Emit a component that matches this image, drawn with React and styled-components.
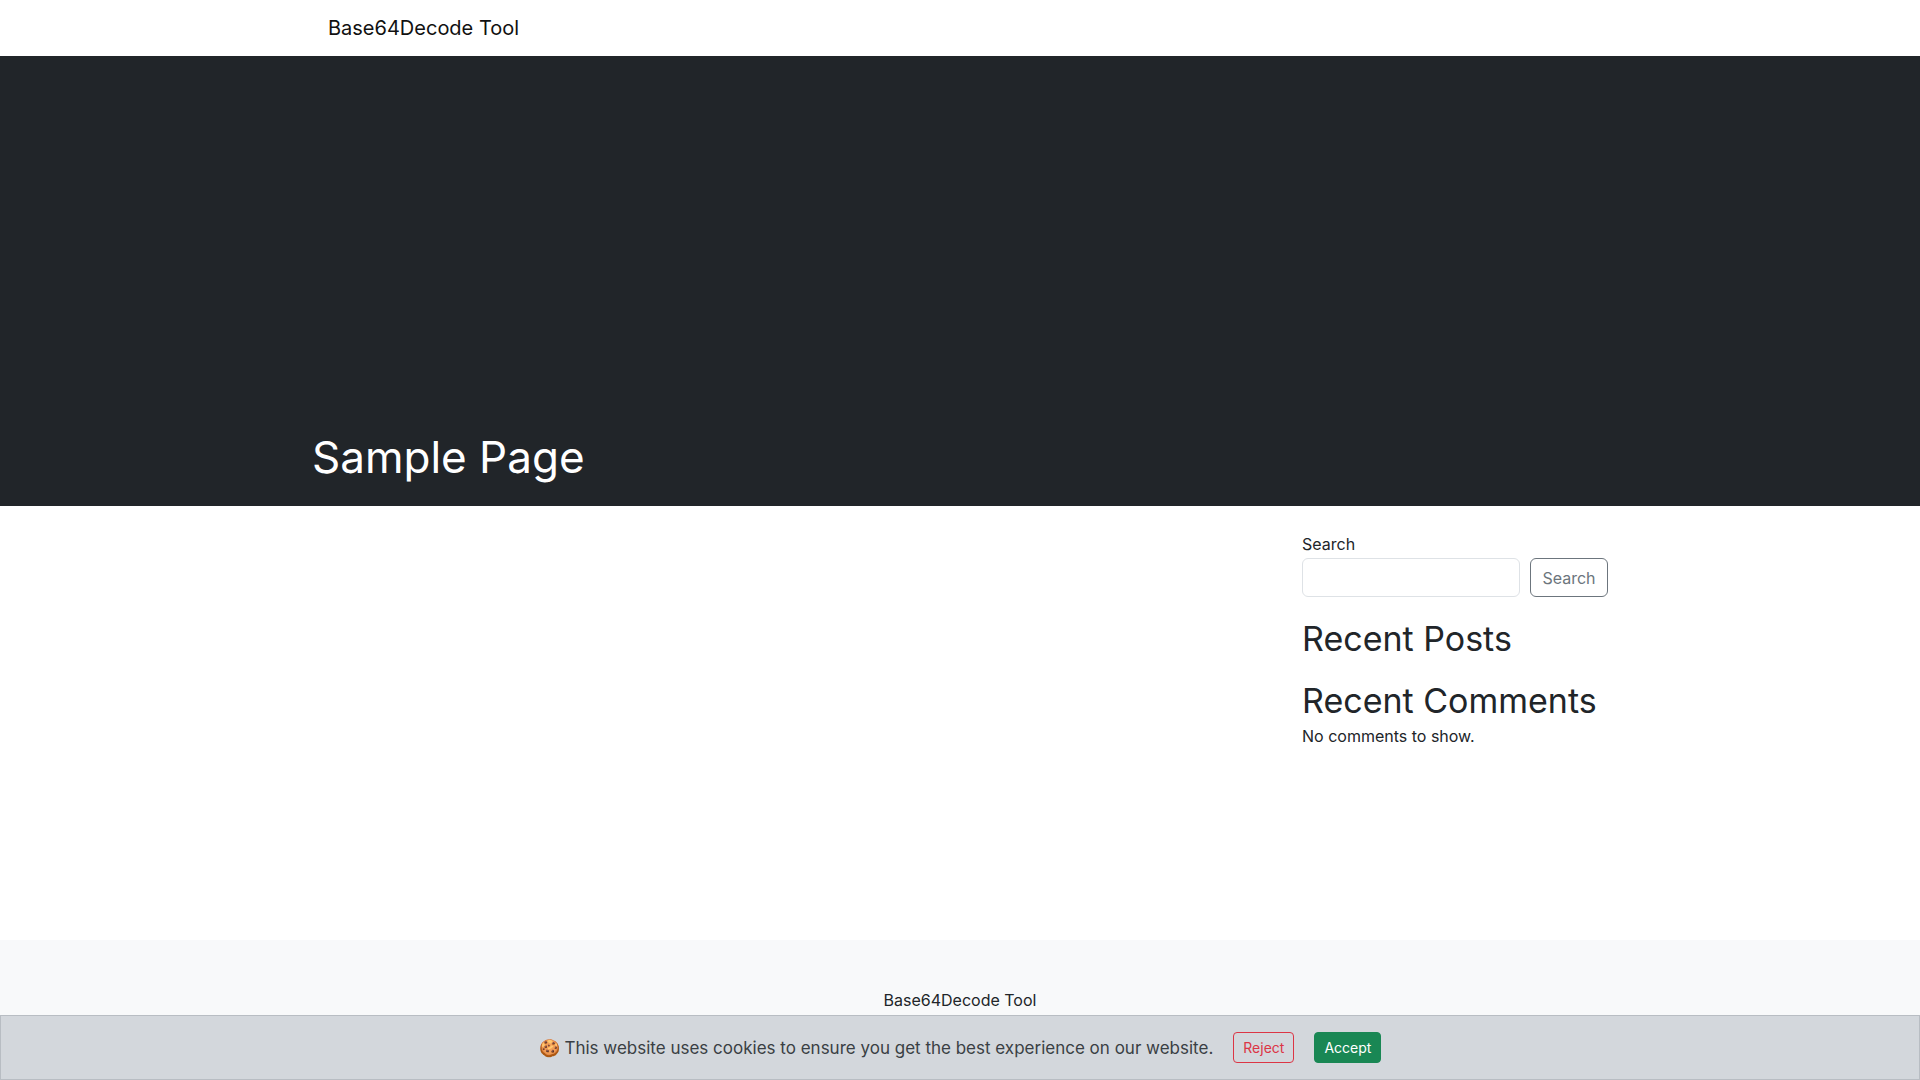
import React from "react";
import styled, { createGlobalStyle } from "styled-components";

const Global = createGlobalStyle`
  * { box-sizing: border-box; }
  body { margin: 0; font-family: Inter, "Noto Sans", sans-serif; color: #212529; background: #fff; }
`;
const Page = styled.div`min-height: 1080px; display: flex; flex-direction: column;`;
const Header = styled.header`height: 56px; display: flex; align-items: center; padding-left: 328px; font-size: 20px; color: #111;`;
const Hero = styled.section`background: #212529; height: 450px; display: flex; align-items: flex-end; padding: 0 0 22px 312px;`;
const Title = styled.h1`margin: 0; color: #fff; font-weight: 400; font-size: 44px; line-height: 1.2;`;
const Main = styled.main`display: grid; grid-template-columns: 1fr 306px; width: 1296px; margin: 0 auto; padding: 24px 0 0; height: 434px;`;
const Side = styled.aside`display: flex; flex-direction: column;`;
const Label = styled.div`font-size: 16px; line-height: 24px; margin-top: 2px;`;
const Row = styled.div`display: flex; gap: 10px; margin-top: 2px;`;
const Input = styled.input`width: 218px; height: 39px; border: 1px solid #dee2e6; border-radius: 6px;`;
const Btn = styled.button`flex: 1; height: 39px; border: 1px solid #6c757d; border-radius: 6px; background: #fff; color: #6c757d; font: inherit; font-size: 16px;`;
const H2 = styled.h2`margin: ${p => p.$top}px 0 0; font-weight: 400; font-size: 34px; line-height: 1.2;`;
const P = styled.p`margin: 4px 0 0; font-size: 16px;`;
const Footer = styled.footer`background: #f8f9fa; flex: 1; display: flex; justify-content: center; padding-top: 50px; font-size: 16px;`;
const Cookie = styled.div`position: fixed; left: 0; right: 0; bottom: 0; height: 65px; background: #d3d7dc; border: 1px solid #b8bdc3; display: flex; align-items: center; justify-content: center; gap: 20px; font-size: 17px; color: #3a3f44;`;
const CBtn = styled.button`font: inherit; font-size: 14px; padding: 6px 9px; border-radius: 4px; margin-left: ${p => p.$ml || 0}px;
  border: 1px solid ${p => p.$ok ? "#198754" : "#dc3545"}; background: ${p => p.$ok ? "#198754" : "transparent"}; color: ${p => p.$ok ? "#fff" : "#dc3545"};`;

export default function App() {
  return (
    <Page>
      <Global />
      <Header>Base64Decode Tool</Header>
      <Hero><Title>Sample Page</Title></Hero>
      <Main>
        <div />
        <Side>
          <Label>Search</Label>
          <Row><Input /><Btn>Search</Btn></Row>
          <H2 $top={22}>Recent Posts</H2>
          <H2 $top={21}>Recent Comments</H2>
          <P>No comments to show.</P>
        </Side>
      </Main>
      <Footer>Base64Decode Tool</Footer>
      <Cookie>
        <span>🍪 This website uses cookies to ensure you get the best experience on our website.</span>
        <CBtn>Reject</CBtn>
        <CBtn $ok>Accept</CBtn>
      </Cookie>
    </Page>
  );
}
